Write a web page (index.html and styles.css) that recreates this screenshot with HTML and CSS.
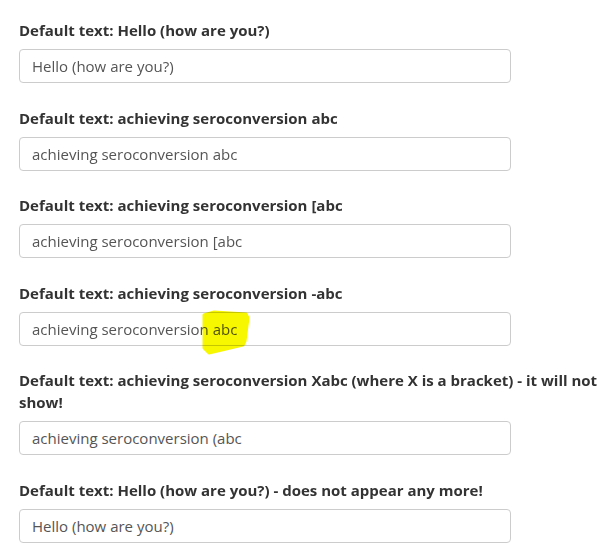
FILE: index.html
```html
<!DOCTYPE html>
<html>
<head>
<meta charset="utf-8">
<link rel="stylesheet" href="styles.css">
</head>
<body>
<div class="page">
  <div class="group">
    <label class="lbl">Default text: Hello (how are you?)</label>
    <div class="field">Hello (how are you?)</div>
  </div>
  <div class="group">
    <label class="lbl">Default text: achieving seroconversion abc</label>
    <div class="field">achieving seroconversion abc</div>
  </div>
  <div class="group">
    <label class="lbl">Default text: achieving seroconversion [abc</label>
    <div class="field">achieving seroconversion [abc</div>
  </div>
  <div class="group">
    <label class="lbl">Default text: achieving seroconversion -abc</label>
    <div class="field marked">achieving seroconversion abc
      <svg class="marker" width="48" height="46" viewBox="0 0 48 46"><path d="M2 5 L12 2 L44 4 L46 8 L43 31 L41 35 L7 43 L2 38 Z" fill="#f7f700" stroke="#f7f700" stroke-width="3" stroke-linejoin="round"/></svg>
    </div>
  </div>
  <div class="group">
    <label class="lbl">Default text: achieving seroconversion Xabc (where X is a bracket) - it will not show!</label>
    <div class="field">achieving seroconversion (abc</div>
  </div>
  <div class="group">
    <label class="lbl">Default text: Hello (how are you?) - does not appear any more!</label>
    <div class="field">Hello (how are you?)</div>
  </div>
</div>
</body>
</html>
```
FILE: styles.css
```css
html, body {
  margin: 0;
  padding: 0;
  background: #fff;
}
.page {
  padding: 19px 8px 0 19px;
  font-family: "Open Sans", sans-serif;
  font-size: 15px;
}
.group {
  margin-bottom: 23.5px;
}
.lbl {
  display: block;
  font-weight: bold;
  color: #333;
  line-height: 22px;
  margin-bottom: 8px;
}
.field {
  position: relative;
  box-sizing: border-box;
  width: 492px;
  height: 34px;
  padding: 6px 12px;
  line-height: 20px;
  color: #555;
  border: 1px solid #ccc;
  border-radius: 4px;
  background: #fff;
  white-space: nowrap;
}
.marker {
  position: absolute;
  left: 182px;
  top: -3px;
  mix-blend-mode: multiply;
}
```
